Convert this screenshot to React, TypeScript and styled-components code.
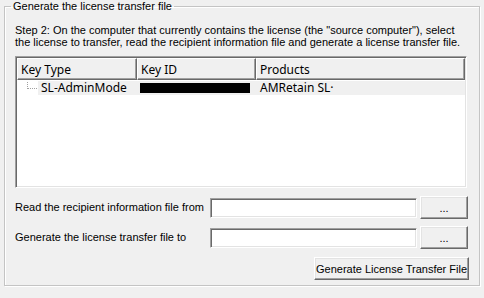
import styled, { createGlobalStyle } from "styled-components";

const GlobalStyle = createGlobalStyle`
  html, body {
    margin: 0;
    padding: 0;
    background: #f0f0f0;
  }
  body {
    font-family: "Liberation Sans", Arial, sans-serif;
    font-size: 11px;
    color: #000;
  }
`;

const Page = styled.div`
  width: 484px;
  height: 298px;
  padding: 0 4px;
  box-sizing: border-box;
`;

const GroupBox = styled.fieldset`
  margin: 0;
  padding: 0 10px 3px 10px;
  border: 1px solid #c4c4c4;
  box-shadow: inset 1px 1px 0 #fff, 1px 1px 0 #fff;
  height: 286px;
  box-sizing: border-box;
  display: flex;
  flex-direction: column;
`;

const Legend = styled.legend`
  margin-left: -4px;
  padding: 0 2px;
  font-size: 11px;
  line-height: 13px;
`;

const Intro = styled.p`
  margin: 11px 0 0 0;
  line-height: 12px;
`;

const ListView = styled.div`
  margin: 8px 2px 0 0;
  height: 132px;
  box-sizing: border-box;
  background: #fff;
  border-style: solid;
  border-width: 1px;
  border-color: #a0a0a0 #fff #fff #a0a0a0;
  box-shadow: inset 1px 1px 0 #696969, inset -1px -1px 0 #e3e3e3;
  padding: 1px;
  font-family: "Noto Sans", "Open Sans", sans-serif;
  font-size: 12px;
`;

const HeaderRow = styled.div`
  display: grid;
  grid-template-columns: 120px 119px 1fr;
  height: 22px;
`;

const HeaderCell = styled.div`
  display: flex;
  align-items: center;
  padding-left: 3px;
  background: #f0f0f0;
  border-style: solid;
  border-width: 1px;
  border-color: #fff #696969 #696969 #fff;
  box-shadow: inset -1px -1px 0 #a0a0a0;
`;

const Row = styled.div`
  display: grid;
  grid-template-columns: 120px 119px 1fr;
  height: 14px;
  margin-top: 1px;
  line-height: 14px;
`;

const TreeCell = styled.div`
  display: flex;
  align-items: center;
`;

const TreeLine = styled.span`
  width: 9px;
  height: 6px;
  margin: -5px 0 0 10px;
  border-left: 1px dotted #a0a0a0;
  border-bottom: 1px dotted #a0a0a0;
`;

const Cell = styled.div<{ $pad?: number }>`
  display: flex;
  align-items: center;
  background: #f0f0f0;
  padding-left: ${(p) => p.$pad ?? 3}px;
  height: 14px;
`;

const TreeCellText = styled(Cell)`
  flex: 1;
  margin-left: 1px;
`;

const Redacted = styled.span`
  width: 110px;
  height: 10px;
  background: #000;
`;

const FileGrid = styled.div`
  margin-top: 8px;
  display: grid;
  grid-template-columns: 192px 207px 48px;
  column-gap: 3px;
  row-gap: 7px;
  align-items: center;
`;

const Label = styled.label`
  line-height: 13px;
`;

const TextBox = styled.input`
  height: 20px;
  margin: 0;
  padding: 0 3px;
  box-sizing: border-box;
  background: #fff;
  border-style: solid;
  border-width: 1px;
  border-color: #a0a0a0 #fff #fff #a0a0a0;
  box-shadow: inset 1px 1px 0 #696969, inset -1px -1px 0 #e3e3e3;
  font: inherit;
  outline: none;
`;

const Button = styled.button<{ $width?: number }>`
  height: 23px;
  width: ${(p) => (p.$width ? `${p.$width}px` : "auto")};
  margin: 0;
  padding: 0;
  background: #f0f0f0;
  border-style: solid;
  border-width: 1px;
  border-color: #fff #696969 #696969 #fff;
  box-shadow: inset -1px -1px 0 #a0a0a0, inset 1px 1px 0 #e3e3e3;
  font: inherit;
  color: #000;
`;

const Footer = styled.div`
  margin-top: 8px;
  display: flex;
  justify-content: flex-end;
`;

export default function App() {
  return (
    <Page>
      <GlobalStyle />
      <GroupBox>
        <Legend>Generate the license transfer file</Legend>
        <Intro>
          Step 2: On the computer that currently contains the license (the "source computer"), select
          <br />
          the license to transfer, read the recipient information file and generate a license transfer file.
        </Intro>
        <ListView>
          <HeaderRow>
            <HeaderCell>Key Type</HeaderCell>
            <HeaderCell>Key ID</HeaderCell>
            <HeaderCell>Products</HeaderCell>
          </HeaderRow>
          <Row>
            <TreeCell>
              <TreeLine />
              <TreeCellText>SL-AdminMode</TreeCellText>
            </TreeCell>
            <Cell>
              <Redacted />
            </Cell>
            <Cell $pad={4}>AMRetain SL·</Cell>
          </Row>
        </ListView>
        <FileGrid>
          <Label>Read the recipient information file from</Label>
          <TextBox />
          <Button $width={48}>...</Button>
          <Label>Generate the license transfer file to</Label>
          <TextBox />
          <Button $width={48}>...</Button>
        </FileGrid>
        <Footer>
          <Button $width={155}>Generate License Transfer File</Button>
        </Footer>
      </GroupBox>
    </Page>
  );
}
